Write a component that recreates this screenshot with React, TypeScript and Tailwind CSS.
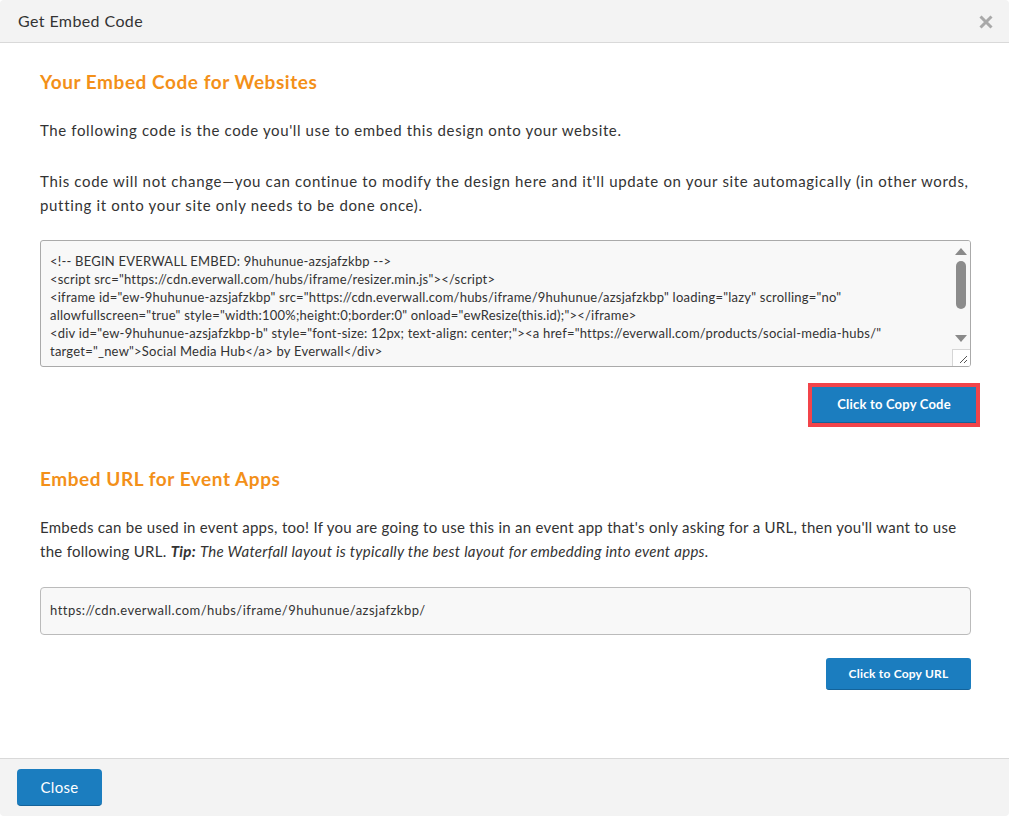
import React from "react";

const codeLines = [
  '<!-- BEGIN EVERWALL EMBED: 9huhunue-azsjafzkbp -->',
  '<script src="https://cdn.everwall.com/hubs/iframe/resizer.min.js"></script>',
  '<iframe id="ew-9huhunue-azsjafzkbp" src="https://cdn.everwall.com/hubs/iframe/9huhunue/azsjafzkbp" loading="lazy" scrolling="no"',
  'allowfullscreen="true" style="width:100%;height:0;border:0" onload="ewResize(this.id);"></iframe>',
  '<div id="ew-9huhunue-azsjafzkbp-b" style="font-size: 12px; text-align: center;"><a href="https://everwall.com/products/social-media-hubs/"',
  'target="_new">Social Media Hub</a> by Everwall</div>',
];

export default function App() {
  return (
    <div className="w-[1009px] h-[816px] bg-white flex flex-col text-[#333] overflow-hidden rounded-[4px]" style={{ fontFamily: "Lato, 'Open Sans', sans-serif" }}>
      <div className="h-[43px] shrink-0 bg-[#f3f3f3] border-b border-[#d9d9d9] flex items-center justify-between pl-[18px] pr-[15px]">
        <div className="text-[16px] tracking-[0.4px] text-[#333]">Get Embed Code</div>
        <svg width="16" height="16" viewBox="0 0 16 16" className="mt-[1px]">
          <path d="M2.5 2.5 L13.5 13.5 M13.5 2.5 L2.5 13.5" stroke="#a9a9a9" strokeWidth="3" strokeLinecap="butt" />
        </svg>
      </div>

      <div className="flex-1 flex flex-col pl-[40px] pr-[38px] pt-[27px]">
        <h2 className="text-[19px] font-bold tracking-[0.55px] text-[#f39019] leading-[24px]">Your Embed Code for Websites</h2>
        <p className="text-[15px] tracking-[0.62px] leading-[24px] mt-[24px]">The following code is the code you'll use to embed this design onto your website.</p>
        <p className="text-[15px] tracking-[0.66px] leading-[24px] mt-[27px]">
          This code will not change—you can continue to modify the design here and it'll update on your site automagically (in other words, putting it onto your site only needs to be done once).
        </p>

        <div className="mt-[23px] h-[127px] border border-[#aaa] rounded-[3px] bg-[#f8f8f8] flex overflow-hidden">
          <div className="flex-1 pl-[9px] pt-[11px] text-[13px] tracking-[0.22px] leading-[18px] text-[#333] whitespace-nowrap overflow-hidden">
            {codeLines.map((l, i) => (
              <div key={i}>{l}</div>
            ))}
          </div>
          <div className="w-[18px] flex flex-col items-center bg-[#f8f8f8]">
            <svg width="12" height="9" viewBox="0 0 12 9" className="mt-[6px]">
              <path d="M0 8 L6 1 L12 8 Z" fill="#8a8a8a" />
            </svg>
            <div className="mt-[5px] w-[10px] h-[48px] rounded-full bg-[#8c8c8c]" />
            <div className="flex-1" />
            <svg width="12" height="9" viewBox="0 0 12 9" className="mb-[6px]">
              <path d="M0 1 L12 1 L6 8 Z" fill="#8a8a8a" />
            </svg>
            <div className="w-[18px] h-[17px] border-t border-l border-[#d6d6d6] bg-white relative">
              <svg width="10" height="10" viewBox="0 0 10 10" className="absolute right-[2px] bottom-[2px]">
                <path d="M9 2 L2 9 M9 6 L6 9" stroke="#555" strokeWidth="1" />
              </svg>
            </div>
          </div>
        </div>

        <div className="flex justify-end mt-[16px] mr-[-9px]">
          <div className="border-[4px] border-[#f2444a] p-0">
            <button className="w-[164px] h-[36px] bg-[#1b7dbf] border-b border-[#14639a] text-white text-[13px] tracking-[0.2px] font-bold">Click to Copy Code</button>
          </div>
        </div>

        <h2 className="text-[19px] font-bold tracking-[0.55px] text-[#f39019] leading-[24px] mt-[40px]">Embed URL for Event Apps</h2>
        <p className="text-[15px] tracking-[0.28px] leading-[24px] mt-[24px]">
          Embeds can be used in event apps, too! If you are going to use this in an event app that's only asking for a URL, then you'll want to use the following URL. <b><i>Tip:</i></b> <i>The Waterfall layout is typically the best layout for embedding into event apps.</i>
        </p>

        <div className="mt-[24px] h-[48px] border border-[#bbb] rounded-[4px] bg-[#f8f8f8] flex items-center pl-[9px] text-[13px] tracking-[0.47px] text-[#333]">
          https://cdn.everwall.com/hubs/iframe/9huhunue/azsjafzkbp/
        </div>

        <div className="flex justify-end mt-[23px]">
          <button className="w-[145px] h-[32px] bg-[#1b7dbf] border-b border-[#14639a] rounded-[3px] text-white text-[12px] tracking-[0.2px] font-bold">Click to Copy URL</button>
        </div>
      </div>

      <div className="h-[58px] shrink-0 bg-[#f3f3f3] border-t border-[#d9d9d9] flex items-center pl-[17px]">
        <button className="w-[85px] h-[37px] bg-[#1b7dbf] border-b border-[#14639a] rounded-[4px] text-white text-[15px] tracking-[0.3px]">Close</button>
      </div>
    </div>
  );
}
